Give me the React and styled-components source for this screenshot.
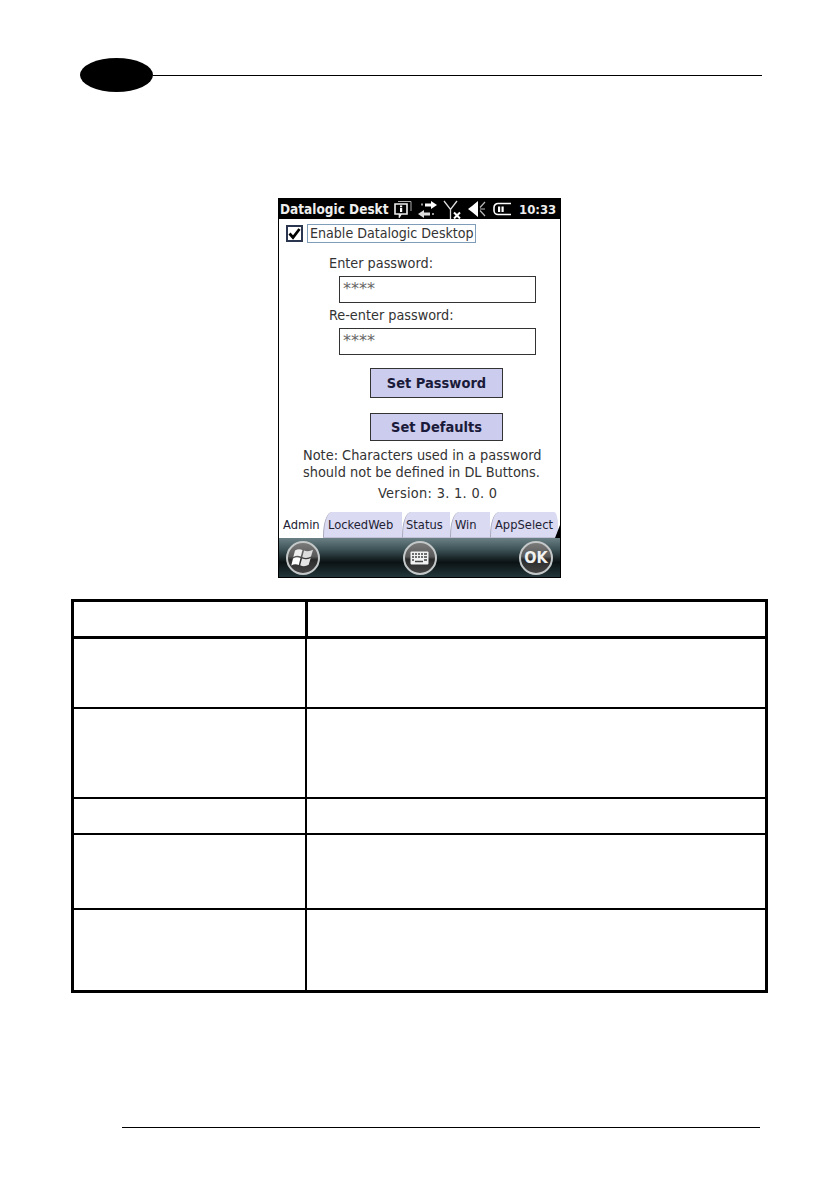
import React from 'react'
import styled, { createGlobalStyle } from 'styled-components'

const GlobalStyle = createGlobalStyle`
  html, body {
    margin: 0;
    padding: 0;
    background: #fff;
  }
`

const tabs = [
  { label: 'Admin', width: 44, pad: 3, active: true },
  { label: 'LockedWeb', width: 79, pad: 4 },
  { label: 'Status', width: 48, pad: 3 },
  { label: 'Win', width: 40, pad: 4 },
  { label: 'AppSelect', width: 68, pad: 4, last: true },
]

const rows = [
  { height: 71 },
  { height: 90 },
  { height: 36 },
  { height: 75 },
  { height: 82 },
]

const App = () => {
  return (
    <Page>
      <GlobalStyle />
      <TopRule>
        <Oval />
        <Line />
      </TopRule>

      <Device>
        <StatusBar>
          <StatusTitle>Datalogic Deskt</StatusTitle>
          <StatusIcons>
            <svg width="18" height="18" viewBox="0 0 18 18">
              <path d="M1 4h12v10H7l-1.500 2.500V14H1z" fill="none" stroke="#eee" strokeWidth="1.600" />
              <path d="M4 1.500h13V11" fill="none" stroke="#aaa" strokeWidth="1" />
              <rect x="6" y="5.500" width="2.200" height="1.800" fill="#fff" />
              <rect x="6" y="8" width="2.200" height="4" fill="#fff" />
            </svg>
            <svg width="19" height="17" viewBox="0 0 19 17">
              <path d="M7 2.500h6V0l6 4-6 4V5.500H7z" fill="#fff" />
              <path d="M12 11.500H6V9l-6 4 6 4v-2.500h6z" fill="#ddd" />
              <path d="M3 3.500h2M14 13h2" stroke="#999" strokeWidth="2" />
            </svg>
            <svg width="19" height="19" viewBox="0 0 19 19">
              <path d="M1 1l6.500 8.500L14 1M7.500 9v10" fill="none" stroke="#ddd" strokeWidth="1.300" />
              <path d="M11 12.500l6 6M17 12.500l-6 6" stroke="#fff" strokeWidth="2" />
            </svg>
            <svg width="18" height="18" viewBox="0 0 18 18">
              <path d="M0 9l4-3 6-5v16l-6-5z" fill="#fff" />
              <path d="M17 2l-5 5.500M12 9h5M12 10.500l5 5.500" fill="none" stroke="#bbb" strokeWidth="1.200" />
            </svg>
            <svg width="19" height="16" viewBox="0 0 19 16">
              <path d="M19 2.500H6a4 4 0 0 0-4 4v3a4 4 0 0 0 4 4h13" fill="none" stroke="#fff" strokeWidth="1.600" />
              <rect x="6" y="5.500" width="2.200" height="5.500" fill="#fff" />
              <rect x="9.500" y="5.500" width="2.200" height="5.500" fill="#fff" />
            </svg>
          </StatusIcons>
          <Clock>10:33</Clock>
        </StatusBar>

        <Screen>
          <CheckRow>
            <CheckBox>
              <svg width="13" height="13" viewBox="0 0 13 13">
                <path d="M1.500 6.500l3.500 4L11.500 2" fill="none" stroke="#000" strokeWidth="2.800" />
              </svg>
            </CheckBox>
            <CheckLabel>Enable Datalogic Desktop</CheckLabel>
          </CheckRow>

          <FieldLabel>Enter password:</FieldLabel>
          <PasswordBox>****</PasswordBox>
          <FieldLabel $second>Re-enter password:</FieldLabel>
          <PasswordBox>****</PasswordBox>

          <ActionButton $top={13} $height={30}>Set Password</ActionButton>
          <ActionButton $top={15} $height={28}>Set Defaults</ActionButton>

          <Note>
            Note: Characters used in a password
            <br />
            should not be defined in DL Buttons.
          </Note>
          <Version>Version: 3. 1. 0. 0</Version>

          <TabStrip>
            {tabs.map((tab) => (
              <Tab
                key={tab.label}
                $width={tab.width}
                $pad={tab.pad}
                $active={tab.active}
                $last={tab.last}
              >
                {tab.label}
              </Tab>
            ))}
          </TabStrip>
        </Screen>

        <SoftBar>
          <RoundButton>
            <svg width="26" height="26" viewBox="0 0 26 26">
              <path d="M5 5.500c2.500-1.500 5-1.500 7.500-.5l-1.700 6.500c-2.500-1-5-1-7.500.5z" fill="#eee" />
              <path d="M14 5.500c3 1.200 6 1 9-.7l-2 6.700c-3 1.700-6 1.800-8.700.5z" fill="#ddd" />
              <path d="M3 13.500c2.500-1.500 5-1.500 7.500-.5l-1.700 7c-2.500-1-5-1-7.500.5z" fill="#fff" />
              <path d="M12 13.500c2.800 1.200 6 1 8.700-.5l-2 6.800c-2.800 1.700-6 1.800-8.500.5z" fill="#e4e4e4" />
            </svg>
          </RoundButton>
          <RoundButton>
            <svg width="19" height="14" viewBox="0 0 19 14">
              <rect x="0.500" y="0.500" width="18" height="13" rx="1" fill="#f2f2f2" />
              <path
                d="M2 3h2M5 3h2M8 3h2M11 3h2M14 3h3M2 6h2M5 6h2M8 6h2M11 6h2M14 6h3M2 9h2M14 9h3M5 10.500h8"
                stroke="#444"
                strokeWidth="1.500"
              />
            </svg>
          </RoundButton>
          <RoundButton>
            <OkText>OK</OkText>
          </RoundButton>
        </SoftBar>
      </Device>

      <InfoTable>
        <HeadRow>
          <HeadCell />
          <RightCell />
        </HeadRow>
        {rows.map((row, i) => (
          <BodyRow key={i} $height={row.height} $first={i === 0}>
            <LeftCell />
            <RightCell />
          </BodyRow>
        ))}
      </InfoTable>

      <BottomRule />
    </Page>
  )
}

const Page = styled.div`
  width: 839px;
  height: 1191px;
  overflow: hidden;
  background: #fff;
  box-sizing: border-box;
  padding-top: 58px;
  font-family: 'DejaVu Sans Condensed', 'DejaVu Sans', sans-serif;
`

const TopRule = styled.div`
  display: flex;
  align-items: center;
  height: 34px;
  margin-left: 80px;
  width: 682px;
`

const Oval = styled.div`
  width: 73px;
  height: 34px;
  border-radius: 50%;
  background: #000;
  flex-shrink: 0;
`

const Line = styled.div`
  flex: 1;
  height: 1px;
  background: #000;
`

const Device = styled.div`
  width: 283px;
  height: 380px;
  margin: 106px 0 0 278px;
  display: flex;
  flex-direction: column;
  box-sizing: border-box;
  border: 1px solid #000;
  background: #fff;
`

const StatusBar = styled.div`
  height: 20px;
  flex-shrink: 0;
  background: #000;
  color: #eee;
  display: flex;
  align-items: center;
  padding-left: 1px;
  font-size: 13.500px;
  font-weight: bold;
`

const StatusTitle = styled.span`
  width: 114px;
  white-space: nowrap;
  overflow: hidden;
`

const StatusIcons = styled.div`
  display: flex;
  align-items: center;
  gap: 6px;
  width: 125px;
`

const Clock = styled.span`
  font-size: 13px;
`

const Screen = styled.div`
  flex: 1;
  display: flex;
  flex-direction: column;
  min-height: 0;
  color: #333;
  font-size: 14px;
`

const CheckRow = styled.div`
  display: flex;
  align-items: center;
  margin: 5px 0 0 7px;
  height: 19px;
`

const CheckBox = styled.div`
  width: 13px;
  height: 13px;
  border: 2px solid #2a3550;
  display: flex;
  align-items: center;
  justify-content: center;
  margin-right: 4px;
`

const CheckLabel = styled.span`
  border: 1px solid #7f9db9;
  padding: 0 1px 0 2px;
  line-height: 17px;
  white-space: nowrap;
  font-size: 14.100px;
`

const FieldLabel = styled.div`
  margin: ${(p) => (p.$second ? '3px' : '11px')} 0 0 50px;
  line-height: 18px;
  font-size: 14.300px;
`

const PasswordBox = styled.div`
  width: 197px;
  height: 27px;
  box-sizing: border-box;
  margin: 4px 0 0 60px;
  border: 1px solid #333;
  padding-left: 3px;
  line-height: 24px;
  font-size: 16px;
  font-family: 'DejaVu Sans', sans-serif;
  color: #666;
`

const ActionButton = styled.div`
  width: 133px;
  height: ${(p) => p.$height}px;
  box-sizing: border-box;
  margin: ${(p) => p.$top}px 0 0 91px;
  border: 1px solid #333;
  background: #ccccee;
  color: #1a1a3a;
  font-weight: bold;
  font-size: 14.500px;
  display: flex;
  align-items: center;
  justify-content: center;
  white-space: nowrap;
`

const Note = styled.div`
  margin: 6px 0 0 24px;
  line-height: 17px;
  white-space: nowrap;
  font-size: 14.400px;
`

const Version = styled.div`
  margin: 4px 0 0 99px;
  line-height: 17px;
  font-size: 14.400px;
  letter-spacing: 0.3px;
`

const TabStrip = styled.div`
  display: flex;
  align-items: flex-end;
  margin-top: auto;
  height: 27px;
  background: #fff;
`

const Tab = styled.div`
  position: relative;
  width: ${(p) => p.$width}px;
  height: 26px;
  box-sizing: border-box;
  display: flex;
  align-items: center;
  white-space: nowrap;
  font-size: 12.800px;
  color: #223;
  padding-left: ${(p) => p.$pad}px;
  background: ${(p) => (p.$active ? '#fff' : '#dadaf2')};
  border-top-left-radius: ${(p) => (p.$active ? '0' : '9px 24px')};
  border-top-right-radius: ${(p) => (p.$last ? '4px 14px' : '0')};
  border-left: 1px solid ${(p) => (p.$active ? 'transparent' : '#a9a9bd')};
  border-bottom: 1px solid ${(p) => (p.$active ? '#fff' : '#c0c0d8')};
  &::after {
    content: '';
    display: ${(p) => (p.$last ? 'block' : 'none')};
    position: absolute;
    right: -2px;
    bottom: -1px;
    width: 5px;
    height: 13px;
    background: #000;
    clip-path: polygon(100% 0, 100% 100%, 0 100%);
  }
`

const SoftBar = styled.div`
  height: 39px;
  flex-shrink: 0;
  display: flex;
  align-items: center;
  justify-content: space-between;
  padding: 0 7px;
  background: linear-gradient(#6a8084 0%, #3c5256 30%, #0b1214 62%, #23373a 100%);
`

const RoundButton = styled.div`
  width: 30px;
  height: 30px;
  border-radius: 50%;
  border: 2px solid #c4c8c8;
  background: linear-gradient(#7a7a7a 0%, #585858 45%, #2a2a2a 55%, #444 100%);
  display: flex;
  align-items: center;
  justify-content: center;
`

const OkText = styled.span`
  color: #f2f2f2;
  font-weight: bold;
  font-size: 16px;
`

const InfoTable = styled.div`
  width: 697px;
  margin: 21px 0 0 71px;
  box-sizing: border-box;
  border: 3px solid #000;
  display: flex;
  flex-direction: column;
`

const HeadRow = styled.div`
  height: 34px;
  display: grid;
  grid-template-columns: 234px 1fr;
`

const BodyRow = styled.div`
  height: ${(p) => p.$height}px;
  display: grid;
  grid-template-columns: 233px 1fr;
  box-sizing: border-box;
  border-top: ${(p) => (p.$first ? 3 : 2)}px solid #000;
`

const LeftCell = styled.div`
  border-right: 2px solid #000;
`

const HeadCell = styled.div`
  border-right: 3px solid #000;
`

const RightCell = styled.div``

const BottomRule = styled.div`
  width: 638px;
  height: 1px;
  background: #000;
  margin: 134px 0 0 122px;
`

export default App
